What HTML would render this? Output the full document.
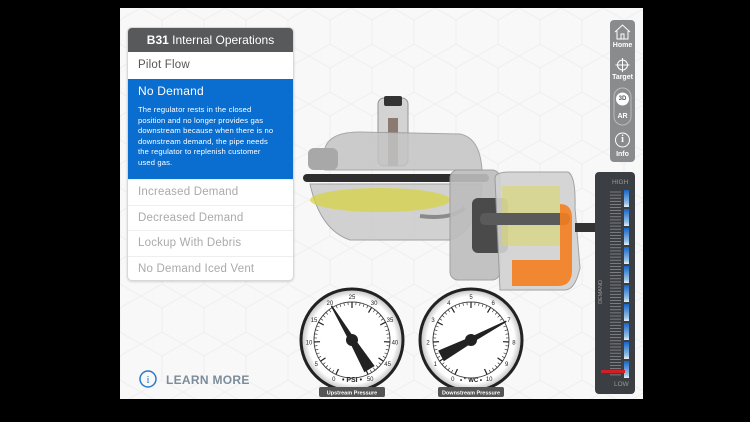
<!DOCTYPE html>
<html><head><meta charset="utf-8"><style>
*{margin:0;padding:0;box-sizing:border-box}
body{width:750px;height:422px;background:#000;position:relative;overflow:hidden;font-family:"Liberation Sans",sans-serif}
#app{position:absolute;left:120px;top:8px;width:523px;height:391px;background:#f8f8f8;overflow:hidden}
.abs{position:absolute}
#panel{left:7px;top:19px;width:167px;height:254px;background:#fff;border:1px solid #d8d8d8;border-radius:5px;overflow:hidden;box-shadow:0 1px 2px rgba(0,0,0,.15)}
#panel .hd{height:24px;background:#58595b;color:#fff;font-size:12px;text-align:center;line-height:24px}
#panel .it{height:25.5px;line-height:25px;padding-left:10px;font-size:11.5px;color:#aaa;border-top:1px solid #eee;letter-spacing:.2px}
#panel .pf{color:#555;height:27px;line-height:27px;border-top:none}
#panel .act{background:#0a6ed1;color:#fff;height:100px;padding:5px 10px 0;line-height:normal}
#panel .act .t{font-size:12px;margin-top:0;letter-spacing:.2px}
#panel .act .d{font-size:7.6px;line-height:10.6px;margin-top:7px;letter-spacing:.15px;padding-right:4px}
#tools{left:490px;top:12px;width:25px;height:142px;background:#8a8b8d;border-radius:4px;color:#fff;font-size:7px;font-weight:bold;text-align:center}
#meter{left:475px;top:164px;width:40px;height:222px;background:#3b3e43;border-radius:4px}
.lm{left:46px;top:365px;color:#7c8c9b;font-size:12px;font-weight:bold;letter-spacing:.3px}
</style></head><body>
<div id="app">
<svg class="abs" style="left:0;top:0" width="523" height="391">
<defs><pattern id="hx" width="42" height="48" patternUnits="userSpaceOnUse"><path d="M21 0 L42 12 L42 36 L21 48 L0 36 L0 12 Z" fill="none" stroke="#eeeeee" stroke-width="1"/></pattern>
<radialGradient id="bz"><stop offset=".85" stop-color="#fff"/><stop offset="1" stop-color="#bdbdbd"/></radialGradient></defs>
<rect width="523" height="391" fill="url(#hx)"/>
<!-- regulator -->
<g>
<rect x="258" y="90" width="30" height="68" rx="6" fill="#cfcfcf" stroke="#8a8a8a" opacity=".9"/>
<rect x="264" y="88" width="18" height="10" rx="2" fill="#333"/>
<rect x="268" y="110" width="10" height="48" fill="#8a7a70"/>
<path d="M205 140 Q210 124 240 124 L340 126 Q360 130 362 162 L205 162 Z" fill="#c4c4c4" stroke="#999" opacity=".85"/>
<rect x="188" y="140" width="30" height="22" rx="6" fill="#a8a8a8"/>
<rect x="183" y="166" width="186" height="8" rx="4" fill="#2e2e2e"/>
<path d="M190 176 L362 176 Q360 220 330 232 L230 232 Q200 222 190 176Z" fill="#cdcdcd" stroke="#999" opacity=".9"/>
<ellipse cx="260" cy="192" rx="70" ry="12" fill="#d7d33a" opacity=".7"/>
<path d="M300 208 Q330 212 345 200" stroke="#8a8a8a" stroke-width="4" fill="none"/>
<rect x="330" y="162" width="50" height="110" rx="8" fill="#bdbdbd" stroke="#999" opacity=".9"/>
<rect x="352" y="190" width="36" height="55" rx="6" fill="#4a4a4a"/>
<path d="M375 170 Q375 164 390 164 L448 164 Q456 168 455 200 L460 260 Q455 282 445 282 L380 282 Z" fill="#d2d2d2" stroke="#999" opacity=".9"/>
<rect x="382" y="178" width="58" height="60" fill="#d9d760" opacity=".55"/>
<rect x="360" y="205" width="90" height="12" rx="5" fill="#5a5a5a"/>
<path d="M440 196 Q452 196 452 210 L452 262 Q452 278 438 278 L392 278 L392 252 L440 252 Z" fill="#f4801f" opacity=".9"/>
<rect x="455" y="215" width="26" height="9" fill="#333"/>
</g>
<!-- gauges -->
<circle cx="232" cy="332" r="51" fill="url(#bz)" stroke="#222" stroke-width="3"/>
<circle cx="232" cy="332" r="38" fill="#fff" stroke="#444" stroke-width="1"/>
<circle cx="351" cy="332" r="51" fill="url(#bz)" stroke="#222" stroke-width="3"/>
<circle cx="351" cy="332" r="38" fill="#fff" stroke="#444" stroke-width="1"/>
<g id="ticks" stroke="#222"></g>
<g font-size="6" font-family="Liberation Sans" text-anchor="middle" fill="#222">
<g transform="rotate(-155 232 332)"><text x="232" y="291" transform="rotate(155 232 289)">0</text></g>
<g transform="rotate(-124 232 332)"><text x="232" y="291" transform="rotate(124 232 289)">5</text></g>
<g transform="rotate(-93 232 332)"><text x="232" y="291" transform="rotate(93 232 289)">10</text></g>
<g transform="rotate(-62 232 332)"><text x="232" y="291" transform="rotate(62 232 289)">15</text></g>
<g transform="rotate(-31 232 332)"><text x="232" y="291" transform="rotate(31 232 289)">20</text></g>
<text x="232" y="291">25</text>
<g transform="rotate(31 232 332)"><text x="232" y="291" transform="rotate(-31 232 289)">30</text></g>
<g transform="rotate(62 232 332)"><text x="232" y="291" transform="rotate(-62 232 289)">35</text></g>
<g transform="rotate(93 232 332)"><text x="232" y="291" transform="rotate(-93 232 289)">40</text></g>
<g transform="rotate(124 232 332)"><text x="232" y="291" transform="rotate(-124 232 289)">45</text></g>
<g transform="rotate(155 232 332)"><text x="232" y="291" transform="rotate(-155 232 289)">50</text></g>
<g transform="rotate(-155 351 332)"><text x="351" y="291" transform="rotate(155 351 289)">0</text></g>
<g transform="rotate(-124 351 332)"><text x="351" y="291" transform="rotate(124 351 289)">1</text></g>
<g transform="rotate(-93 351 332)"><text x="351" y="291" transform="rotate(93 351 289)">2</text></g>
<g transform="rotate(-62 351 332)"><text x="351" y="291" transform="rotate(62 351 289)">3</text></g>
<g transform="rotate(-31 351 332)"><text x="351" y="291" transform="rotate(31 351 289)">4</text></g>
<text x="351" y="291">5</text>
<g transform="rotate(31 351 332)"><text x="351" y="291" transform="rotate(-31 351 289)">6</text></g>
<g transform="rotate(62 351 332)"><text x="351" y="291" transform="rotate(-62 351 289)">7</text></g>
<g transform="rotate(93 351 332)"><text x="351" y="291" transform="rotate(-93 351 289)">8</text></g>
<g transform="rotate(124 351 332)"><text x="351" y="291" transform="rotate(-124 351 289)">9</text></g>
<g transform="rotate(155 351 332)"><text x="351" y="291" transform="rotate(-155 351 289)">10</text></g>
<text x="232" y="374" font-weight="bold" font-size="7">• PSI •</text>
<text x="351" y="374" font-weight="bold" font-size="6">• " WC •</text>
</g>
<g transform="rotate(-31 232 332)" fill="#222"><path d="M231.3 292 L232.7 292 L235 332 L238 366 L226 366 L229 332Z"/></g>
<circle cx="232" cy="332" r="6" fill="#222"/>
<g transform="rotate(62 351 332)" fill="#222"><path d="M350.3 292 L351.7 292 L354 332 L357 366 L345 366 L348 332Z"/></g>
<circle cx="351" cy="332" r="6" fill="#222"/>
<rect x="199" y="379" width="66" height="10" rx="2" fill="#555"/>
<rect x="318" y="379" width="66" height="10" rx="2" fill="#555"/>
<text x="232" y="386.5" font-size="5.5" fill="#fff" text-anchor="middle" font-weight="bold">Upstream Pressure</text>
<text x="351" y="386.5" font-size="5.5" fill="#fff" text-anchor="middle" font-weight="bold">Downstream Pressure</text>
<!-- learn more icon -->
<circle cx="28" cy="371" r="8" fill="none" stroke="#2a7ac8" stroke-width="1.5"/>
<text x="28" y="375" font-size="11" fill="#2a7ac8" text-anchor="middle" font-family="Liberation Serif">i</text>
</svg>

<div id="panel" class="abs">
<div class="hd"><b>B31</b> Internal Operations</div>
<div class="it pf">Pilot Flow</div>
<div class="act"><div class="t">No Demand</div><div class="d">The regulator rests in the closed position and no longer provides gas downstream because when there is no downstream demand, the pipe needs the regulator to replenish customer used gas.</div></div>
<div class="it">Increased Demand</div>
<div class="it">Decreased Demand</div>
<div class="it">Lockup With Debris</div>
<div class="it">No Demand Iced Vent</div>
</div>
<div class="abs lm">LEARN MORE</div>

<div id="tools" class="abs">
<svg width="25" height="142" style="position:absolute;left:0;top:0" fill="none" stroke="#fff" stroke-width="1">
<path d="M5 12 L12.5 5 L20 12 M7 11 L7 19 L18 19 L18 11 M11 19 L11 14 L14 14 L14 19"/>
<circle cx="12.5" cy="45" r="5"/><path d="M12.5 38 V52 M5.5 45 H19.5"/>
<rect x="4" y="68" width="17" height="37" rx="8.5" stroke="#bbb"/>
<circle cx="12.5" cy="79" r="6.5" fill="#fff" stroke="none"/>
<circle cx="12.5" cy="120" r="7"/>
</svg>
<div class="abs" style="left:0;top:22px;width:25px">Home</div>
<div class="abs" style="left:0;top:54px;width:25px">Target</div>
<div class="abs" style="left:0;top:76px;width:25px;color:#555;font-size:6px">3D</div>
<div class="abs" style="left:0;top:93px;width:25px">AR</div>
<div class="abs" style="left:0;top:114px;width:25px;font-size:10px;font-family:'Liberation Serif'">i</div>
<div class="abs" style="left:0;top:131px;width:25px">Info</div>
</div>

<div id="meter" class="abs">
<div class="abs" style="left:17px;top:7px;color:#999;font-size:6.5px">HIGH</div>
<div class="abs" style="left:19px;top:209px;color:#999;font-size:6.5px">LOW</div>
<div class="abs" style="left:-6px;top:117px;color:#999;font-size:5.5px;transform:rotate(-90deg)">DEMAND</div>
<svg width="40" height="222" style="position:absolute;left:0;top:0">
<defs><linearGradient id="bl" x1="0" y1="0" x2="0" y2="1"><stop offset="0" stop-color="#1565c8"/><stop offset=".8" stop-color="#9cc4e6"/><stop offset="1" stop-color="#e8f0f8"/></linearGradient></defs>
<g id="mt" stroke="#999" stroke-width=".7"></g>
<g id="seg" fill="url(#bl)"></g>
<rect x="6" y="198" width="24" height="3" fill="#d21f26"/>
</svg>
</div>
</div>
<script>
var ns="http://www.w3.org/2000/svg",t=document.getElementById('ticks');
[[232,332],[351,332]].forEach(function(c){for(var i=0;i<=50;i++){var a=(-155+i*6.2)*Math.PI/180,r1=38,r2=i%5==0?32:35;var l=document.createElementNS(ns,'line');l.setAttribute('x1',c[0]+r1*Math.sin(a));l.setAttribute('y1',c[1]-r1*Math.cos(a));l.setAttribute('x2',c[0]+r2*Math.sin(a));l.setAttribute('y2',c[1]-r2*Math.cos(a));l.setAttribute('stroke-width',i%5==0?1.2:.6);t.appendChild(l);}});
var mt=document.getElementById('mt');for(var y=20;y<=203;y+=3.1){var l=document.createElementNS(ns,'line');l.setAttribute('x1',15);l.setAttribute('x2',26);l.setAttribute('y1',y);l.setAttribute('y2',y);mt.appendChild(l);}
var sg=document.getElementById('seg');for(var k=0;k<10;k++){var r=document.createElementNS(ns,'rect');r.setAttribute('x',29);r.setAttribute('y',18+k*19);r.setAttribute('width',5);r.setAttribute('height',17);sg.appendChild(r);}
</script>
</body></html>
